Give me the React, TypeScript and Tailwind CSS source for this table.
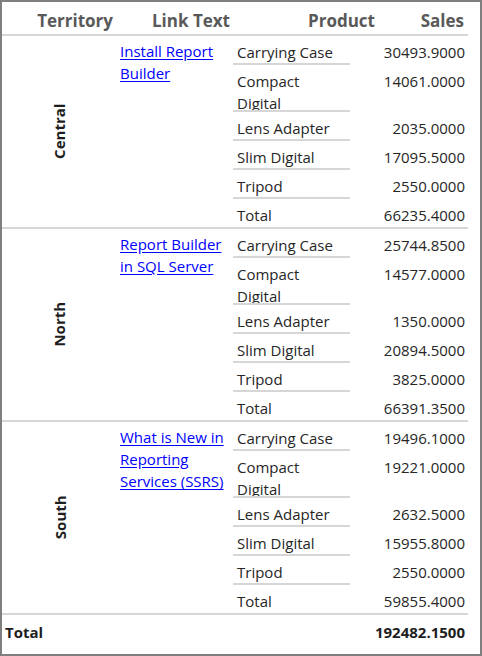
import React from 'react';

type Row = { product: string; sales: string; tall?: boolean };
type Group = { territory: string; link: string[]; rows: Row[] };

const GROUPS: Group[] = [
  {
    territory: 'Central',
    link: ['Install Report', 'Builder'],
    rows: [
      { product: 'Carrying Case', sales: '30493.9000' },
      { product: 'Compact Digital', sales: '14061.0000', tall: true },
      { product: 'Lens Adapter', sales: '2035.0000' },
      { product: 'Slim Digital', sales: '17095.5000' },
      { product: 'Tripod', sales: '2550.0000' },
      { product: 'Total', sales: '66235.4000' },
    ],
  },
  {
    territory: 'North',
    link: ['Report Builder', 'in SQL Server'],
    rows: [
      { product: 'Carrying Case', sales: '25744.8500' },
      { product: 'Compact Digital', sales: '14577.0000', tall: true },
      { product: 'Lens Adapter', sales: '1350.0000' },
      { product: 'Slim Digital', sales: '20894.5000' },
      { product: 'Tripod', sales: '3825.0000' },
      { product: 'Total', sales: '66391.3500' },
    ],
  },
  {
    territory: 'South',
    link: ['What is New in', 'Reporting', 'Services (SSRS)'],
    rows: [
      { product: 'Carrying Case', sales: '19496.1000' },
      { product: 'Compact Digital', sales: '19221.0000', tall: true },
      { product: 'Lens Adapter', sales: '2632.5000' },
      { product: 'Slim Digital', sales: '15955.8000' },
      { product: 'Tripod', sales: '2550.0000' },
      { product: 'Total', sales: '59855.4000' },
    ],
  },
];

const font = { fontFamily: '"Open Sans", "Noto Sans", sans-serif' };

function GroupBlock({ group }: { group: Group }) {
  return (
    <div className="flex w-[466px] border-b-2 border-[#d6d6d6]">
      {/* Territory, rotated */}
      <div className="w-[115px] flex items-center justify-center">
        <span className="-rotate-90 font-bold text-[15px] text-[#1e1e1e] whitespace-nowrap">{group.territory}</span>
      </div>

      {/* Link text */}
      <div className="w-[116px] pl-[3px] pt-[4px] text-[15px] leading-[22px]">
        {group.link.map((l, i) => (
          <div key={i}>
            <a href="#" className="text-[#0000ff] underline underline-offset-2 whitespace-nowrap">{l}</a>
          </div>
        ))}
      </div>

      {/* Product / sales */}
      <div className="flex flex-col w-[235px]">
        {group.rows.map((r, i) => {
          const last = i === group.rows.length - 1;
          return (
            <div key={i} className={`flex ${r.tall ? 'h-[47px]' : last ? 'h-[28px]' : 'h-[29px]'}`}>
              <div
                className={`w-[117px] pl-[4px] pt-[5px] text-[15px] leading-[22px] text-[#262626] overflow-hidden whitespace-nowrap ${
                  last ? '' : 'border-b-2 border-[#d6d6d6]'
                }`}
              >
                {r.tall ? (
                  <>
                    <div>Compact</div>
                    <div>Digital</div>
                  </>
                ) : (
                  r.product
                )}
              </div>
              <div className="w-[118px] pr-[3px] pt-[5px] text-right text-[15px] leading-[22px] text-[#262626]">{r.sales}</div>
            </div>
          );
        })}
      </div>
    </div>
  );
}

export default function App() {
  return (
    <div className="w-[482px] h-[656px] bg-white border-2 border-[#7f7f7f] overflow-hidden" style={font}>
      {/* Header */}
      <div className="flex w-[466px] h-[34px] pt-[7px] border-b-2 border-[#d6d6d6] text-[17px] leading-[24px] font-bold text-[#595959]">
        <div className="w-[111px] text-right">Territory</div>
        <div className="w-[117px] text-right">Link Text</div>
        <div className="w-[145px] text-right">Product</div>
        <div className="w-[89px] text-right">Sales</div>
      </div>

      {GROUPS.map((g) => (
        <GroupBlock key={g.territory} group={g} />
      ))}

      {/* Grand total */}
      <div className="flex w-[466px] h-[34px] items-center text-[15px] font-bold text-[#1e1e1e]">
        <div className="pl-[3px] flex-1">Total</div>
        <div className="pr-[3px]">192482.1500</div>
      </div>
    </div>
  );
}
